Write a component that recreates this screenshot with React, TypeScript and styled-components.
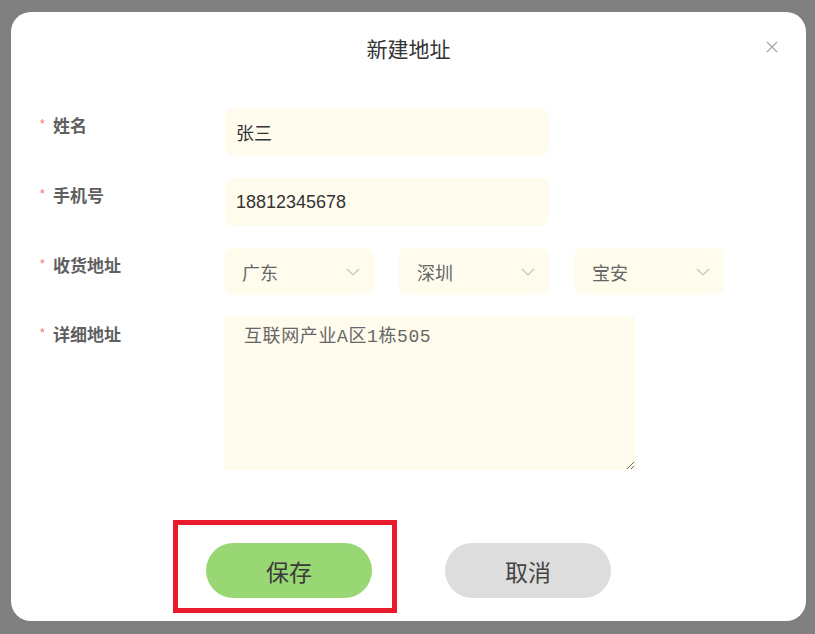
import * as React from 'react';
import styled, { createGlobalStyle } from 'styled-components';

const GlobalStyle = createGlobalStyle`
  html, body {
    margin: 0;
    padding: 0;
    background: #808080;
  }
  * {
    box-sizing: border-box;
  }
`;

const Backdrop = styled.div`
  width: 815px;
  height: 634px;
  padding: 12px 9px 0 11px;
  background: #808080;
  font-family: "Liberation Sans", "Noto Sans CJK SC", sans-serif;
`;

const Dialog = styled.div`
  position: relative;
  width: 795px;
  height: 609px;
  background: #ffffff;
  border-radius: 20px;
  display: flex;
  flex-direction: column;
`;

const Header = styled.div`
  padding-top: 25px;
  height: 64px;
  text-align: center;
  font-size: 21px;
  line-height: 26px;
  color: #333333;
`;

const CloseButton = styled.button`
  position: absolute;
  top: 29px;
  right: 28px;
  width: 12px;
  height: 12px;
  padding: 0;
  border: none;
  background: none;
  cursor: pointer;
  display: flex;
`;

const Form = styled.div`
  padding: 32px 0 0 29px;
  display: flex;
  flex-direction: column;
  gap: 22px;
`;

const Row = styled.div`
  display: grid;
  grid-template-columns: 186px 1fr;
  align-items: start;
`;

const Label = styled.div`
  padding-top: 9px;
  font-size: 17px;
  line-height: 20px;
  font-weight: bold;
  color: #5f5f5f;
  display: flex;
  align-items: flex-start;
`;

const Star = styled.span`
  color: #f56c6c;
  font-size: 12px;
  line-height: 14px;
  width: 13px;
  font-weight: normal;
`;

const TextInput = styled.div`
  width: 324px;
  height: 48px;
  margin-left: -1px;
  background: #fffcee;
  border-radius: 8px;
  padding: 0 11px;
  display: flex;
  align-items: center;
  font-size: 18px;
  color: #333333;
`;

const SelectGroup = styled.div`
  display: flex;
  gap: 25px;
  margin-left: -2px;
`;

const Select = styled.div`
  width: 150px;
  height: 47px;
  background: #fffcee;
  border-radius: 8px;
  padding: 0 14px 0 18px;
  display: flex;
  align-items: center;
  justify-content: space-between;
  font-size: 18px;
  color: #666666;
`;

const TextArea = styled.textarea`
  display: block;
  width: 411px;
  height: 153px;
  margin-left: -2px;
  background: #fffcee;
  border: none;
  outline: none;
  border-radius: 0;
  padding: 9px 20px;
  font-family: "Liberation Mono", "Noto Sans CJK SC", monospace;
  font-size: 18px;
  letter-spacing: 0.6px;
  line-height: 22px;
  color: #666666;
`;

const Footer = styled.div`
  margin-top: auto;
  padding-bottom: 23px;
  display: flex;
  justify-content: center;
  gap: 73px;
`;

const ButtonWrap = styled.div`
  position: relative;
`;

const Highlight = styled.div`
  position: absolute;
  left: -33px;
  top: -23px;
  width: 224px;
  height: 93px;
  border: 5px solid #e81a2b;
  pointer-events: none;
`;

const Button = styled.button<{ $primary?: boolean }>`
  width: 166px;
  height: 55px;
  border: none;
  border-radius: 28px;
  background: ${(p) => (p.$primary ? '#99d774' : '#dddddd')};
  color: ${(p) => (p.$primary ? '#3a3a3a' : '#444444')};
  font-family: "Liberation Sans", "Noto Sans CJK SC", sans-serif;
  font-size: 23px;
  cursor: pointer;
`;

const Chevron = () => (
  <svg width="14" height="8" viewBox="0 0 14 8" fill="none">
    <path d="M1 1l6 6 6-6" stroke="#c0c4cc" strokeWidth="1.2" />
  </svg>
);

const CloseIcon = () => (
  <svg width="12" height="12" viewBox="0 0 12 12">
    <path d="M1 1l10 10M11 1L1 11" stroke="#aaaaaa" strokeWidth="1.4" />
  </svg>
);

const FieldLabel: React.FC<{ text: string }> = ({ text }) => (
  <Label>
    <Star>*</Star>
    {text}
  </Label>
);

const regions = ['广东', '深圳', '宝安'];

export default function App() {
  return (
    <Backdrop>
      <GlobalStyle />
      <Dialog>
        <Header>新建地址</Header>
        <CloseButton aria-label="关闭">
          <CloseIcon />
        </CloseButton>
        <Form>
          <Row>
            <FieldLabel text="姓名" />
            <TextInput>张三</TextInput>
          </Row>
          <Row>
            <FieldLabel text="手机号" />
            <TextInput>18812345678</TextInput>
          </Row>
          <Row>
            <FieldLabel text="收货地址" />
            <SelectGroup>
              {regions.map((r) => (
                <Select key={r}>
                  {r}
                  <Chevron />
                </Select>
              ))}
            </SelectGroup>
          </Row>
          <Row>
            <FieldLabel text="详细地址" />
            <TextArea defaultValue="互联网产业A区1栋505" />
          </Row>
        </Form>
        <Footer>
          <ButtonWrap>
            <Highlight />
            <Button $primary>保存</Button>
          </ButtonWrap>
          <ButtonWrap>
            <Button>取消</Button>
          </ButtonWrap>
        </Footer>
      </Dialog>
    </Backdrop>
  );
}
